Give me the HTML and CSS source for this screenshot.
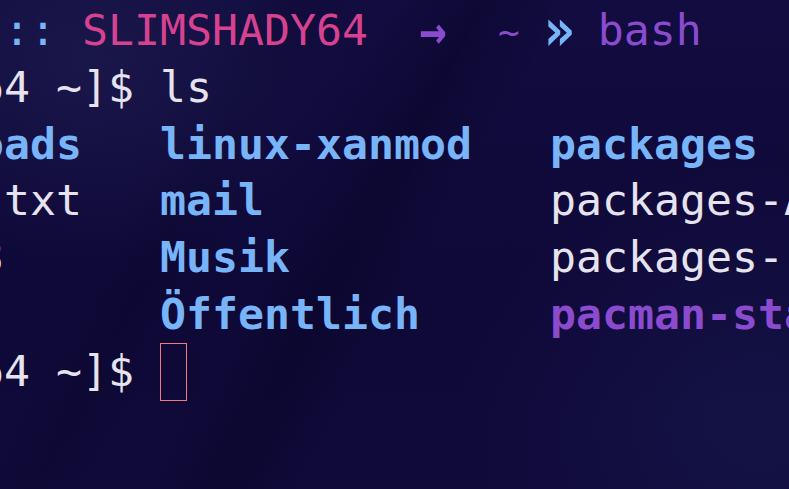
FILE: index.html
```html
<!DOCTYPE html>
<html lang="de">
<head>
<meta charset="utf-8">
<title>bash</title>
<link rel="stylesheet" href="styles.css">
</head>
<body>
<div class="term">
<div class="line"> <span class="blue">::</span> <span class="pink">SLIMSHADY64</span>  <span class="purple b arrow">→</span>  <span class="purple tilde">~</span> <span class="blue b chev">»</span> <span class="purple">bash</span></div>
<div class="line">64 ~]$ ls</div>
<div class="line"><span class="blue b">oads</span>   <span class="blue b">linux-xanmod</span>   <span class="blue b">packages</span></div>
<div class="line">.txt   <span class="blue b">mail</span>           packages-AUR</div>
<div class="line">3      <span class="blue b">Musik</span>          packages-</div>
<div class="line">       <span class="blue b">Öffentlich</span>     <span class="purple b">pacman-stats</span></div>
<div class="line">64 ~]$ <span class="cursor"></span></div>
</div>
</body>
</html>
```
FILE: styles.css
```css
html, body {
  margin: 0;
  padding: 0;
  width: 789px;
  height: 489px;
  overflow: hidden;
}
body {
  background-color: #0f0a3a;
  background-image:
    radial-gradient(ellipse 260px 200px at 90px 60px, rgba(36, 36, 88, 0.45), rgba(36, 36, 88, 0) 100%),
    radial-gradient(ellipse 300px 260px at 760px 420px, rgba(26, 28, 85, 0.45), rgba(26, 28, 85, 0) 100%),
    linear-gradient(118deg, rgba(0,0,0,0) 38%, rgba(6, 3, 30, 0.35) 46%, rgba(0,0,0,0) 54%),
    linear-gradient(118deg, rgba(0,0,0,0) 22%, rgba(6, 3, 30, 0.2) 28%, rgba(0,0,0,0) 34%),
    linear-gradient(180deg, #120c40 0%, #0f0938 60%, #100a3a 100%);
}
.term {
  margin-left: -22px;
  padding-top: 2px;
  font-family: "DejaVu Sans Mono", monospace;
  font-size: 43.19px;
  line-height: 56.8px;
  color: #e6e3ee;
}
.line {
  height: 56.8px;
  white-space: pre;
}
.blue { color: #78b4f8; }
.pink { color: #d6428f; }
.purple { color: #8b4bcf; }
.b { font-weight: bold; }
.arrow {
  display: inline-block;
  transform: scale(1.05, 1.25);
}
.chev {
  display: inline-block;
  transform: scale(1.2, 1.35);
}
.tilde {
  font-size: 36px;
}
.cursor {
  display: inline-block;
  box-sizing: border-box;
  width: 27px;
  height: 58px;
  border: 1.5px solid #f27a76;
  vertical-align: top;
}
```
